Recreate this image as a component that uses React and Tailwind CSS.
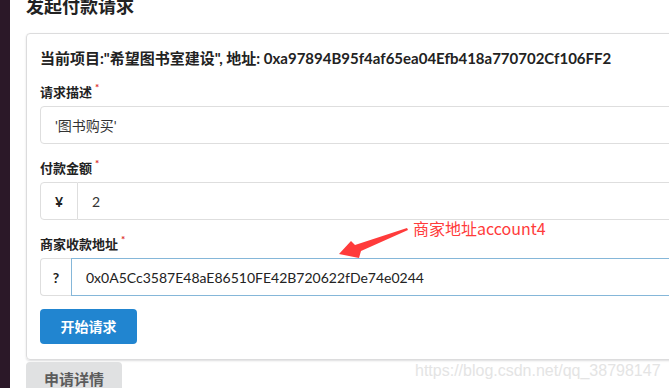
import React from "react";

const font = { fontFamily: 'Lato, "Noto Sans CJK SC", sans-serif' };

function Label({ children }) {
  return (
    <div className="flex items-start text-[13px] leading-[16px] font-bold text-[#222] mb-[6px]">
      <span>{children}</span>
      <span className="text-[#db2828] text-[10px] leading-[10px] ml-[3px] -mt-[2px]">*</span>
    </div>
  );
}

export default function App() {
  return (
    <div
      className="relative flex w-[669px] h-[388px] overflow-hidden bg-white"
      style={font}
    >
      <div className="w-[10px] shrink-0 bg-[#2b1828]" />
      <div className="flex flex-col pl-[16px] w-[720px] shrink-0">
        <div className="text-[18px] leading-[22px] font-bold text-[#222] -mt-[5px] mb-[16px]">
          发起付款请求
        </div>
        <div className="w-[700px] border border-[#dcdcdd] rounded-[4px] shadow-[0_1px_2px_0_rgba(34,36,38,0.15)] pl-[13px] pt-[14px] pb-[15px] flex flex-col">
          <div className="text-[15px] leading-[20px] font-bold text-[#222] mb-[16px]">
            当前项目:"希望图书室建设", 地址: 0xa97894B95f4af65ea04Efb418a770702Cf106FF2
          </div>
          <Label>请求描述</Label>
          <div className="h-[38px] border border-[#dedede] rounded-[4px] flex items-center pl-[14px] text-[14px] text-[#333] mb-[16px]">
            '图书购买'
          </div>
          <Label>付款金额</Label>
          <div className="h-[38px] flex mb-[16px]">
            <div className="w-[38px] border border-[#dedede] rounded-l-[4px] flex items-center justify-center text-[14px] font-bold text-[#222]">
              ¥
            </div>
            <div className="flex-1 border border-l-0 border-[#dedede] flex items-center pl-[14px] text-[14px] text-[#333]">
              2
            </div>
          </div>
          <Label>商家收款地址</Label>
          <div className="h-[38px] flex mb-[13px]">
            <div className="w-[31px] border border-r-0 border-[#dedede] rounded-l-[4px] flex items-center justify-center text-[14px] font-bold text-[#222]">
              ?
            </div>
            <div className="flex-1 border border-[#85b7d9] flex items-center pl-[14px] text-[14px] text-[#222]">
              0x0A5Cc3587E48aE86510FE42B720622fDe74e0244
            </div>
          </div>
          <div>
            <button className="h-[35px] w-[97px] bg-[#2185d0] rounded-[4px] text-white text-[14px] font-bold">
              开始请求
            </button>
          </div>
        </div>
        <div className="mt-[2px]">
          <div className="w-[96px] h-[30px] bg-[#e0e1e2] rounded-t-[4px] flex items-center justify-center text-[15px] font-bold text-[#5c5c5c] pt-[4px]">
            申请详情
          </div>
        </div>
      </div>

      <svg className="absolute left-0 top-0" width="669" height="388" viewBox="0 0 669 388">
        <polygon
          points="339,254 351,241 355,245 407,228 408,230 361,251 359,258"
          fill="#ff3b3b"
        />
      </svg>
      <div
        className="absolute left-[413px] top-[218px] text-[16px] leading-[20px] text-[#ff3b3b]"
        style={{ fontFamily: '"Noto Sans CJK SC", sans-serif' }}
      >
        商家地址account4
      </div>
      <div
        className="absolute left-[415px] top-[361px] text-[16px] leading-[20px] text-[#e4e4e4]"
        style={{ fontFamily: '"Liberation Sans", sans-serif' }}
      >
        https://blog.csdn.net/qq_38798147
      </div>
    </div>
  );
}
